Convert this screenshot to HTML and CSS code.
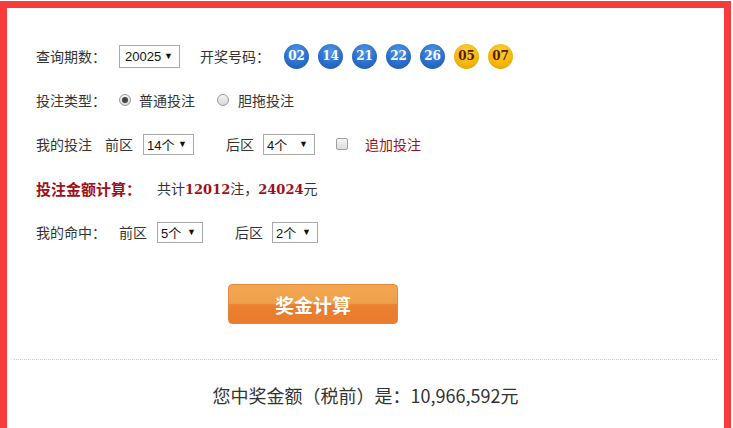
FILE: index.html
```html
<!DOCTYPE html>
<html lang="zh-CN">
<head>
<meta charset="utf-8">
<title>奖金计算</title>
<link rel="stylesheet" href="styles.css">
</head>
<body>
<div class="frame">
  <div class="form">
    <div class="row">
      <span class="label">查询期数：</span>
      <span class="sel sel-issue"><span class="sel-text">20025</span><span class="arrow">▼</span></span>
      <span class="label draw-label">开奖号码：</span>
      <span class="balls">
        <span class="ball blue">02</span>
        <span class="ball blue">14</span>
        <span class="ball blue">21</span>
        <span class="ball blue">22</span>
        <span class="ball blue">26</span>
        <span class="ball gold">05</span>
        <span class="ball gold">07</span>
      </span>
    </div>
    <div class="row">
      <span class="label">投注类型：</span>
      <span class="radio checked"></span><span class="opt">普通投注</span>
      <span class="radio second"></span><span class="opt">胆拖投注</span>
    </div>
    <div class="row">
      <span class="plain">我的投注</span>
      <span class="zone first">前区</span>
      <span class="sel sel-w51"><span class="sel-text">14个</span><span class="arrow">▼</span></span>
      <span class="zone back">后区</span>
      <span class="sel sel-w52"><span class="sel-text">4个</span><span class="arrow">▼</span></span>
      <span class="check"></span>
      <span class="extra">追加投注</span>
    </div>
    <div class="row">
      <span class="cost-label">投注金额计算：</span>
      <span class="cost">共计<b class="num">12012</b>注，<b class="num">24024</b>元</span>
    </div>
    <div class="row">
      <span class="label">我的命中：</span>
      <span class="zone">前区</span>
      <span class="sel sel-w46 gap-left"><span class="sel-text">5个</span><span class="arrow">▼</span></span>
      <span class="zone back">后区</span>
      <span class="sel sel-w46"><span class="sel-text">2个</span><span class="arrow">▼</span></span>
    </div>
    <div class="btn-row">
      <button class="calc-btn" type="button">奖金计算</button>
    </div>
  </div>
  <div class="divider"></div>
  <div class="result">您中奖金额（税前）是：10,966,592元</div>
</div>
</body>
</html>
```
FILE: styles.css
```css
html, body {
  margin: 0;
  padding: 0;
  background: #ffffff;
}
body {
  font-family: "Noto Sans CJK SC", "Noto Sans", sans-serif;
  color: #333333;
  font-size: 14px;
}
.frame {
  margin-top: 1px;
  width: 717px;
  height: 420px;
  border: 7px solid #f83c3c;
  background: #ffffff;
}
.form {
  padding: 26px 0 0 29px;
}
.row {
  height: 44px;
  display: flex;
  align-items: center;
  white-space: nowrap;
}
.label {
  width: 70px;
  margin-right: 13px;
}
.plain {
  margin-right: 13px;
}
.draw-label {
  margin-left: 20px;
  margin-right: 14px;
}
.sel {
  display: inline-flex;
  align-items: center;
  justify-content: space-between;
  box-sizing: border-box;
  height: 21px;
  border: 1px solid #a9a9a9;
  background: #ffffff;
  padding: 0 6px 0 3px;
  font-family: "Liberation Sans", Arial, sans-serif;
  font-size: 13px;
  color: #111111;
}
.sel-text {
  font-family: "Liberation Sans", "Noto Sans CJK SC", sans-serif;
  padding-top: 1px;
}
.arrow {
  font-size: 9px;
  color: #111111;
}
.sel-issue {
  width: 61px;
  height: 23px;
  font-size: 13px;
  padding-left: 5px;
  padding-right: 6px;
}
.sel-w51 { width: 51px; }
.sel-w52 { width: 52px; }
.sel-w46 { width: 46px; }
.gap-left { margin-left: 10px; }
.balls {
  display: flex;
  gap: 9px;
}
.ball {
  width: 25px;
  height: 25px;
  border-radius: 50%;
  display: inline-flex;
  align-items: center;
  justify-content: center;
  font-family: "DejaVu Serif", "Liberation Serif", serif;
  font-weight: bold;
  font-size: 12px;
}
.ball.blue {
  color: #ffffff;
  background: radial-gradient(circle at 50% 30%, #4f97e6 0%, #2b6fcc 55%, #1a55a8 100%);
}
.ball.gold {
  color: #5a1c00;
  background: radial-gradient(circle at 50% 30%, #fbd03a 0%, #f2b60c 60%, #dc9c00 100%);
}
.radio {
  width: 12px;
  height: 12px;
  box-sizing: border-box;
  border-radius: 50%;
  border: 1px solid #9a9a9a;
  background: linear-gradient(#f4f4f4, #d8d8d8);
  margin-right: 8px;
  position: relative;
}
.radio.checked::after {
  content: "";
  position: absolute;
  left: 2px;
  top: 2px;
  width: 6px;
  height: 6px;
  border-radius: 50%;
  background: #444444;
}
.radio.second {
  margin-left: 22px;
  margin-right: 9px;
}
.opt {
  color: #333333;
}
.zone.first {
  margin-right: 10px;
}
.zone.back {
  margin-left: 32px;
  margin-right: 9px;
}
.check {
  width: 12px;
  height: 12px;
  box-sizing: border-box;
  border: 1px solid #a0a0a0;
  border-radius: 2px;
  background: linear-gradient(#f6f6f6, #dcdcdc);
  margin-left: 21px;
  margin-right: 17px;
}
.extra {
  color: #a0101a;
}
.cost-label {
  font-weight: bold;
  font-size: 15px;
  color: #a0101a;
  margin-right: 16px;
}
.cost {
  color: #333333;
}
.num {
  font-family: "DejaVu Serif", "Liberation Serif", serif;
  font-weight: bold;
  font-size: 13px;
  color: #a0101a;
}
.btn-row {
  padding: 30px 0 0 192px;
}
.calc-btn {
  width: 170px;
  height: 40px;
  border: 1px solid #e2893e;
  border-radius: 4px;
  background: linear-gradient(#f3a650 0%, #f0a04c 48%, #ec7f30 52%, #eb7b2d 100%);
  color: #ffffff;
  font-family: "Noto Sans CJK SC", sans-serif;
  font-weight: bold;
  font-size: 19px;
  padding: 0;
  text-shadow: 0 0 1px rgba(180, 80, 0, 0.4);
}
.divider {
  margin: 35px 7px 0 7px;
  border-top: 1px dotted #c8c8c8;
}
.result {
  margin-top: 23px;
  text-align: center;
  font-size: 18px;
  line-height: 24px;
  color: #333333;
}
```
